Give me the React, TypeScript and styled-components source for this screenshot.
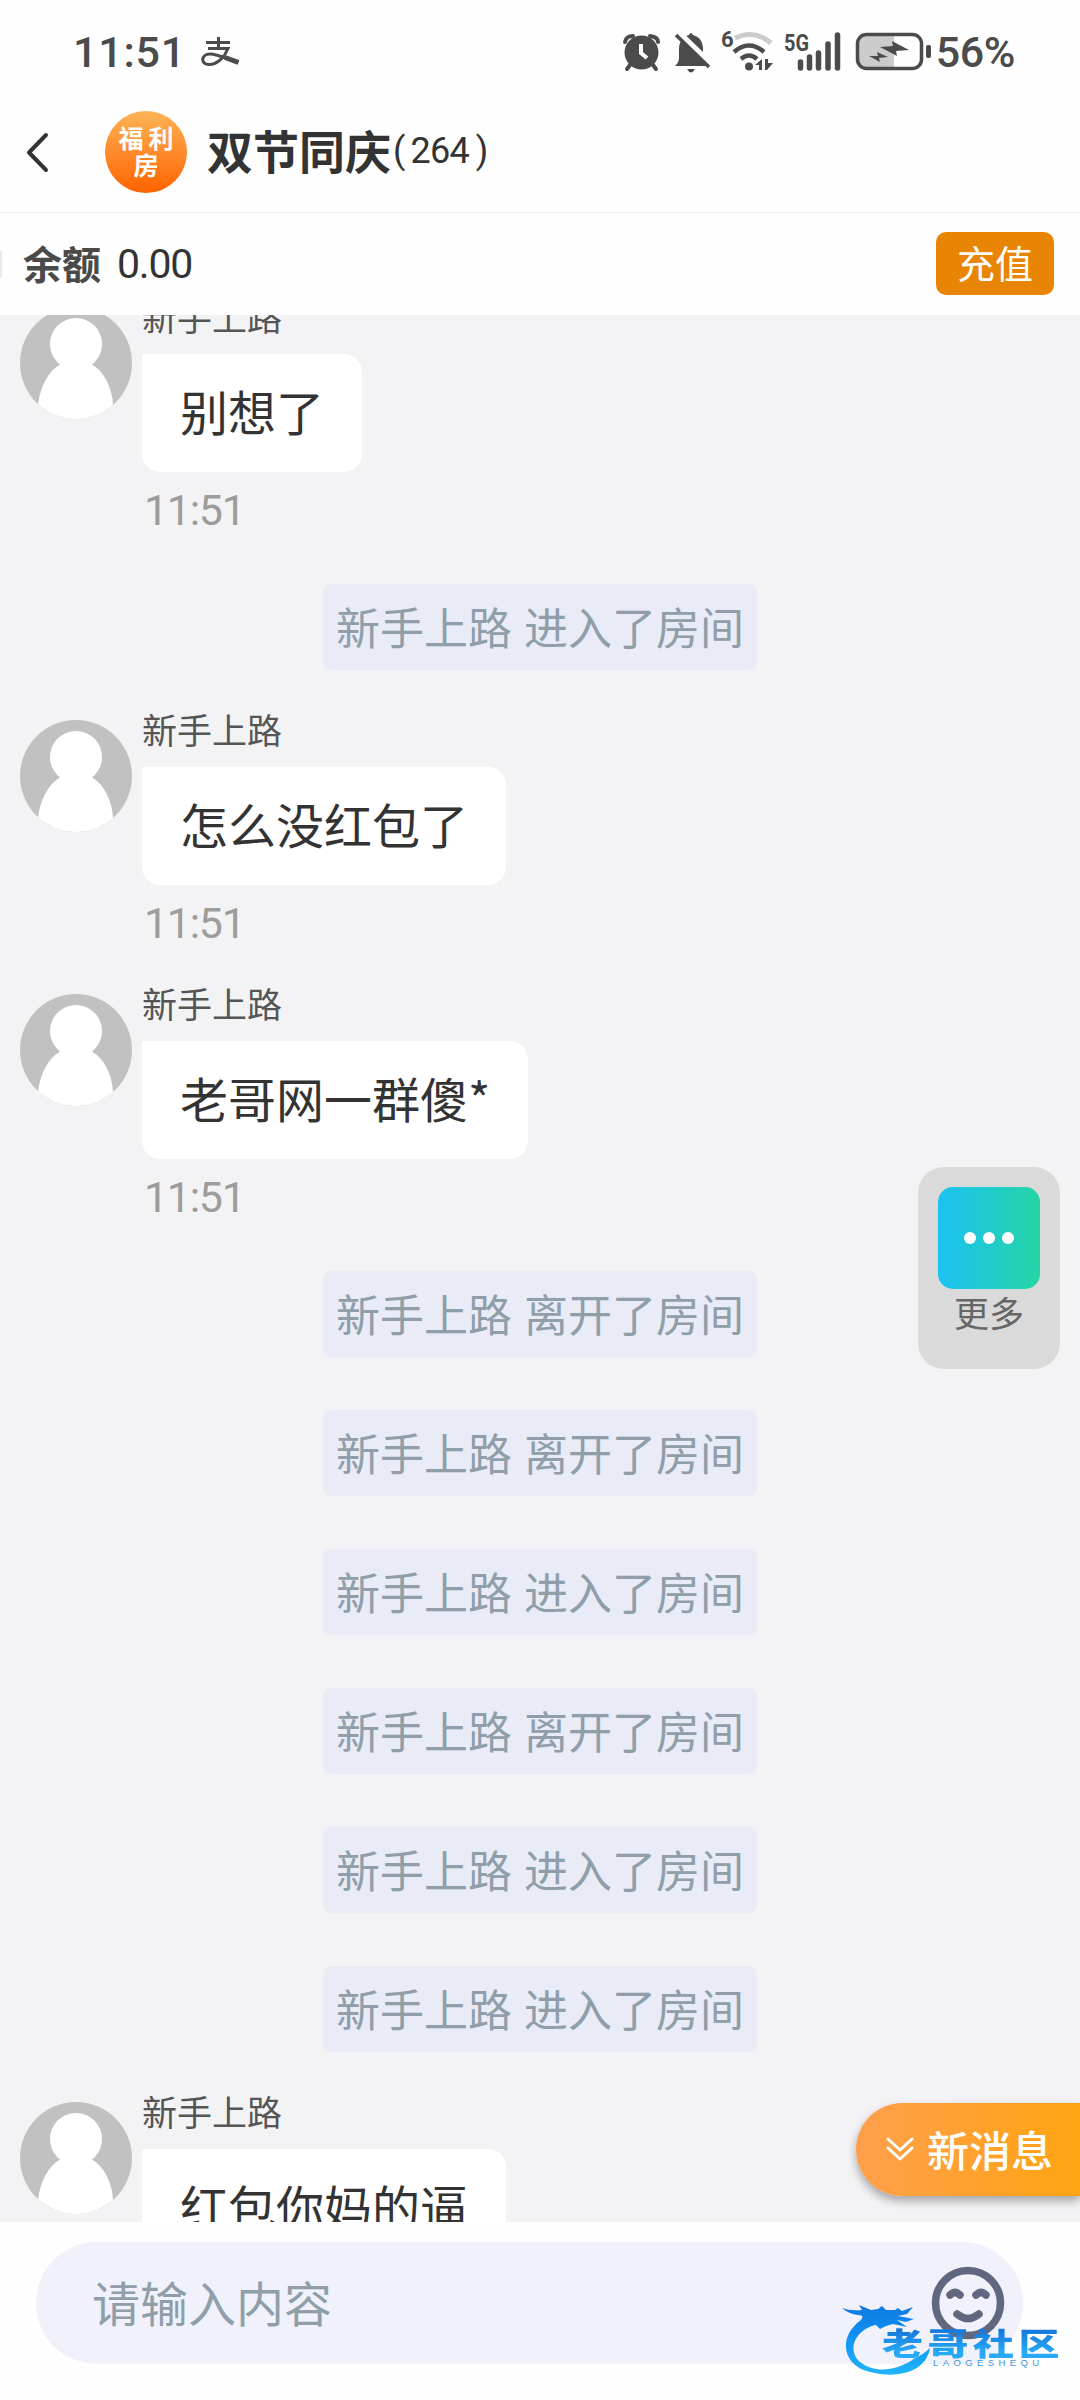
import React from 'react';
import styled, { createGlobalStyle } from 'styled-components';

const Global = createGlobalStyle`
  *{box-sizing:border-box}
  body{margin:0;background:#fff;font-family:"Noto Sans CJK SC",sans-serif;color:#333}
  svg{display:block;flex:none}
`;
const Screen = styled.div`position:relative;width:1080px;height:2400px;overflow:hidden;background:#fefefe;display:flex;flex-direction:column;`;
const StatusBar = styled.div`height:104px;padding:0 65px 0 73px;display:flex;align-items:center;color:#4b4b4b;justify-content:space-between;`;
const Group = styled.div`display:flex;align-items:center;`;
const Clock = styled.span`font:500 43px/50px Roboto,sans-serif;letter-spacing:0.8px;margin-right:15px;`;
const Percent = styled.span`font:500 43px/50px Roboto,sans-serif;letter-spacing:-.4px;margin-left:3px;`;
const Header = styled.header`height:109px;padding:0 26px 12px;display:flex;align-items:center;border-bottom:1px solid #e9e9e9;`;
const RoomBadge = styled.div`width:82px;height:82px;margin:0 20px 0 56px;border-radius:50%;background:linear-gradient(#fdb457,#ff6200);color:#fff;display:flex;align-items:center;justify-content:center;text-align:center;font-size:25px;line-height:27px;font-weight:700;letter-spacing:5px;padding:0 0 3px 5px;`;
const Title = styled.h1`margin:0;padding-bottom:7px;font-size:46px;line-height:60px;font-weight:700;color:#333;`;
const Count = styled.span`font:400 36px/60px Roboto,sans-serif;letter-spacing:-.8px;color:#333;padding:0 0 2px 2px;`;
const Inner = styled.span`margin:0 7px 0 6px;`;
const Balance = styled.section`height:102px;padding:0 26px 0 0;display:flex;align-items:center;`;
const Sliver = styled.i`width:2px;height:27px;background:#e8e8ee;margin-right:21px;`;
const Label = styled.b`padding-bottom:5px;font-size:39px;line-height:60px;color:#4a4a4a;margin-right:16px;`;
const Amount = styled.span`font:400 41px/60px Roboto,sans-serif;letter-spacing:-1.2px;color:#333;flex:1;`;
const Recharge = styled.button`width:118px;height:63px;margin-bottom:2px;border:0;border-radius:10px;background:#e98504;color:#fff;font:400 38px/60px "Noto Sans CJK SC",sans-serif;padding:0 0 2px;`;
const Chat = styled.main`height:1907px;background:#f3f3f5;overflow:hidden;display:flex;flex-direction:column;padding-left:20px;`;
const Message = styled.article<{ $first?: boolean }>`display:flex;height:224px;flex:none;margin:${p => (p.$first ? '-8px' : '0')} 0 50px;gap:10px;align-items:flex-start;`;
const Body = styled.div`display:flex;flex-direction:column;align-items:flex-start;margin-top:-15px;`;
const Name = styled.div`height:62px;font-size:35px;line-height:48px;color:#555;`;
const Bubble = styled.div`height:118px;padding:0 38px;border-radius:2px 18px 18px 18px;background:#fff;color:#333;font-size:48px;line-height:113px;white-space:nowrap;`;
const Time = styled.time`font:400 43px/50px Roboto,sans-serif;color:#9c9c9c;letter-spacing:-1.3px;margin:13px 0 0 2px;`;
const Notice = styled.div`height:86px;flex:none;align-self:center;margin:3px 20px 50px 0;padding:0 13px;border-radius:8px;background:#e9ebf7;color:#8f9ea8;font-size:44px;line-height:84px;word-spacing:2px;white-space:nowrap;`;
const Footer = styled.footer`height:178px;padding:20px 57px 0 36px;background:#fefefe;`;
const InputBox = styled.div`height:122px;border-radius:61px;background:#f0f1fa;display:flex;align-items:center;justify-content:space-between;padding:0 18px 0 56px;`;
const Placeholder = styled.span`padding-bottom:5px;font-size:48px;line-height:70px;color:#8f9ea8;`;
const More = styled.aside`position:absolute;left:918px;top:1167px;width:142px;height:202px;border-radius:26px;background:#dadada;display:flex;flex-direction:column;align-items:center;padding-top:20px;color:#666;font-size:35px;line-height:45px;`;
const MoreTile = styled.div`width:102px;height:102px;border-radius:15px;background:linear-gradient(90deg,#1bc2f3,#25d5a6);display:flex;align-items:center;justify-content:center;gap:7px;`;
const Dot = styled.i`width:12px;height:12px;border-radius:50%;background:#fff;`;
const NewMessages = styled.div`position:absolute;left:856px;top:2103px;width:224px;height:93px;border-radius:47px 0 0 47px;background:linear-gradient(90deg,#ff9f4d,#ffa412);box-shadow:0 5px 10px rgba(0,0,0,.32);color:#fff;font-size:42px;line-height:60px;font-weight:500;display:flex;align-items:center;gap:13px;padding:0 0 2px 30px;`;
const Watermark = styled.div`position:absolute;left:840px;top:2300px;width:226px;height:78px;`;

const MessageItem = ({ text, first }: { text: string; first?: boolean }) => (
  <Message $first={first}>
    <svg width="112" height="112" viewBox="0 0 112 112">
      <clipPath id="face"><circle cx="56" cy="56" r="56" /></clipPath>
      <g clipPath="url(#face)"><rect width="112" height="112" fill="#c1c1c1" />
        <circle cx="56" cy="37" r="26" fill="#fff" />
        <path d="M18 112V98C20 80 28 64 41 57H71C84 64 92 80 93 98V112Z" fill="#fff" /></g>
    </svg>
    <Body><Name>新手上路</Name><Bubble>{text}</Bubble><Time>11:51</Time></Body>
  </Message>
);

const notices = ['离开', '离开', '进入', '离开', '进入', '进入'];

export default function App() {
  return (
    <Screen>
      <Global />
      <StatusBar>
        <Group>
          <Clock>11:51</Clock>
          <svg width="38" height="30" viewBox="0 0 38 30" fill="none" stroke="#4b4b4b" strokeWidth="3">
            <path d="M5 5.500H29M17.500 0V11M7 11.500H27C24 19 17 27.500 8 27.500C-1 27.500 0 17 9 17C17 17 26 22 37 25.500" />
            <path d="M24 20.500L37.500 25.500" strokeWidth="5" />
          </svg>
        </Group>
        <StatusIcons />
      </StatusBar>
      <Header>
        <svg width="23" height="41" viewBox="0 0 23 41" fill="none" stroke="#333" strokeWidth="4" strokeLinecap="round" strokeLinejoin="round"><path d="M20 3L3 20.500L20 38" /></svg>
        <RoomBadge>福利<br />房</RoomBadge>
        <Title>双节同庆</Title><Count>(<Inner>264</Inner>)</Count>
      </Header>
      <Balance><Sliver /><Label>余额</Label><Amount>0.00</Amount><Recharge>充值</Recharge></Balance>
      <Chat>
        <MessageItem text="别想了" first />
        <Notice>新手上路 进入了房间</Notice>
        <MessageItem text="怎么没红包了" />
        <MessageItem text="老哥网一群傻*" />
        {notices.map((n, i) => <Notice key={i}>新手上路 {n}了房间</Notice>)}
        <MessageItem text="红包你妈的逼" />
      </Chat>
      <Footer>
        <InputBox>
          <Placeholder>请输入内容</Placeholder>
          <svg width="74" height="74" viewBox="0 0 74 74" fill="none" stroke="#60677f" strokeWidth="7.500" strokeLinecap="round">
            <circle cx="37" cy="37" r="32.500" /><path d="M19 29Q24 24 29 29M45 29Q50 24 55 29M26 48Q37 57 48 48" />
          </svg>
        </InputBox>
      </Footer>
      <More><MoreTile><Dot /><Dot /><Dot /></MoreTile>更多</More>
      <NewMessages>
        <svg width="28" height="24" viewBox="0 0 28 24" fill="none" stroke="#fff" strokeWidth="3" strokeLinecap="round" strokeLinejoin="round"><path d="M2 2L14 13L26 2M2 11L14 22L26 11" /></svg>
        新消息
      </NewMessages>
      <Logo />
    </Screen>
  );
}

const LogoName = styled.span`position:absolute;left:42px;top:13px;font-size:41px;line-height:56px;font-weight:900;letter-spacing:4.500px;background:linear-gradient(#1679dd 25%,#27a9f5 75%);-webkit-background-clip:text;background-clip:text;color:transparent;white-space:nowrap;transform:scaleY(.75);`;
const LogoLatin = styled.span`position:absolute;left:93px;top:57px;font:400 9.500px/12px "Liberation Sans",sans-serif;letter-spacing:4.400px;color:#4295dc;`;
const Logo = () => (
  <Watermark>
    <svg width="226" height="78" viewBox="0 0 226 78">
      <defs><linearGradient id="dragon" x2="0" y2="1"><stop stopColor="#1178e0" /><stop offset=".35" stopColor="#0f8cf0" /><stop offset="1" stopColor="#20b4fa" /></linearGradient></defs>
      <path fill="url(#dragon)" d="M2 8Q10 11 22 10L19 5L31 10L38 9L42 6L46 10L55 10L58 8L62 11L73 7L67 14L58 16L74 19L66 22L57 20L67 27L53 24L46 26L40 29L36 25C16 29 6 50 20 62C38 76 62 68 75 58Q84 54 90 48C86 72 58 78 35 73C3 69-4 38 21 20Q25 15 18 15Q9 14 2 8Z" />
    </svg>
    <LogoName>老哥社区</LogoName>
    <LogoLatin>LAOGESHEQU</LogoLatin>
  </Watermark>
);

const Tiny = styled.text`font-family:Roboto,sans-serif;font-weight:700;fill:#4b4b4b;`;
const StatusIcons = () => (
  <Group>
    <svg width="312" height="48" viewBox="620 27 312 48" fill="none" stroke="#4b4b4b">
      <circle cx="640.500" cy="51.500" r="17" fill="#4b4b4b" stroke="none" />
      <path d="M624 41Q625 35 632 35M649 35Q657 36 657 41M629 64L626 68M652 64L655 68" strokeWidth="4" strokeLinecap="round" />
      <path d="M640 43V52L646 57" stroke="#fff" strokeWidth="4" />
      <path fill="#4b4b4b" stroke="none" d="M674 65C677 62 678 60 678 56V48C678 40 683 35 688 34Q690 30 692 34C699 36 702 41 702 48V56L706 65ZM686 68H694Q690 75 686 68Z" />
      <path d="M677 31L712 65" stroke="#fefefe" strokeWidth="6" /><path d="M675 34L708 66" strokeWidth="3.500" />
      <Tiny x="720" y="46" fontSize="22" stroke="none">6</Tiny>
      <path d="M734 37Q753 28 770 42" stroke="#ccc" strokeWidth="5" />
      <path d="M733 51Q748 38 763 51M740 58Q748 51 756 58" strokeWidth="4.500" />
      <circle cx="748" cy="65.500" r="4" fill="#4b4b4b" stroke="none" />
      <path fill="#4b4b4b" stroke="none" d="M754 64L761 58V69H758V64ZM764 58H767V62H772L766 69H764Z" />
      <Tiny x="783" y="50" fontSize="24" textLength="25" lengthAdjust="spacingAndGlyphs" stroke="none">5G</Tiny>
      <path d="M799.500 61V67M808.500 56V67M817.500 52V67M827 43V67M836.500 34V67" strokeWidth="5.500" strokeLinecap="round" />
      <path d="M866 35H893V67H866Q857 67 857 58V43Q857 35 866 35Z" fill="#ccc" stroke="none" />
      <rect x="856.500" y="33.500" width="64" height="34" rx="9" strokeWidth="3.500" />
      <path fill="#4b4b4b" stroke="none" d="M879 46L892 45L891 40L908 49L895 50L896 55ZM868 55L877 55L876 51L887 56L878 57L879 61Z" />
      <rect x="925" y="44" width="5" height="13" rx="2" fill="#4b4b4b" stroke="none" />
    </svg>
    <Percent>56%</Percent>
  </Group>
);
